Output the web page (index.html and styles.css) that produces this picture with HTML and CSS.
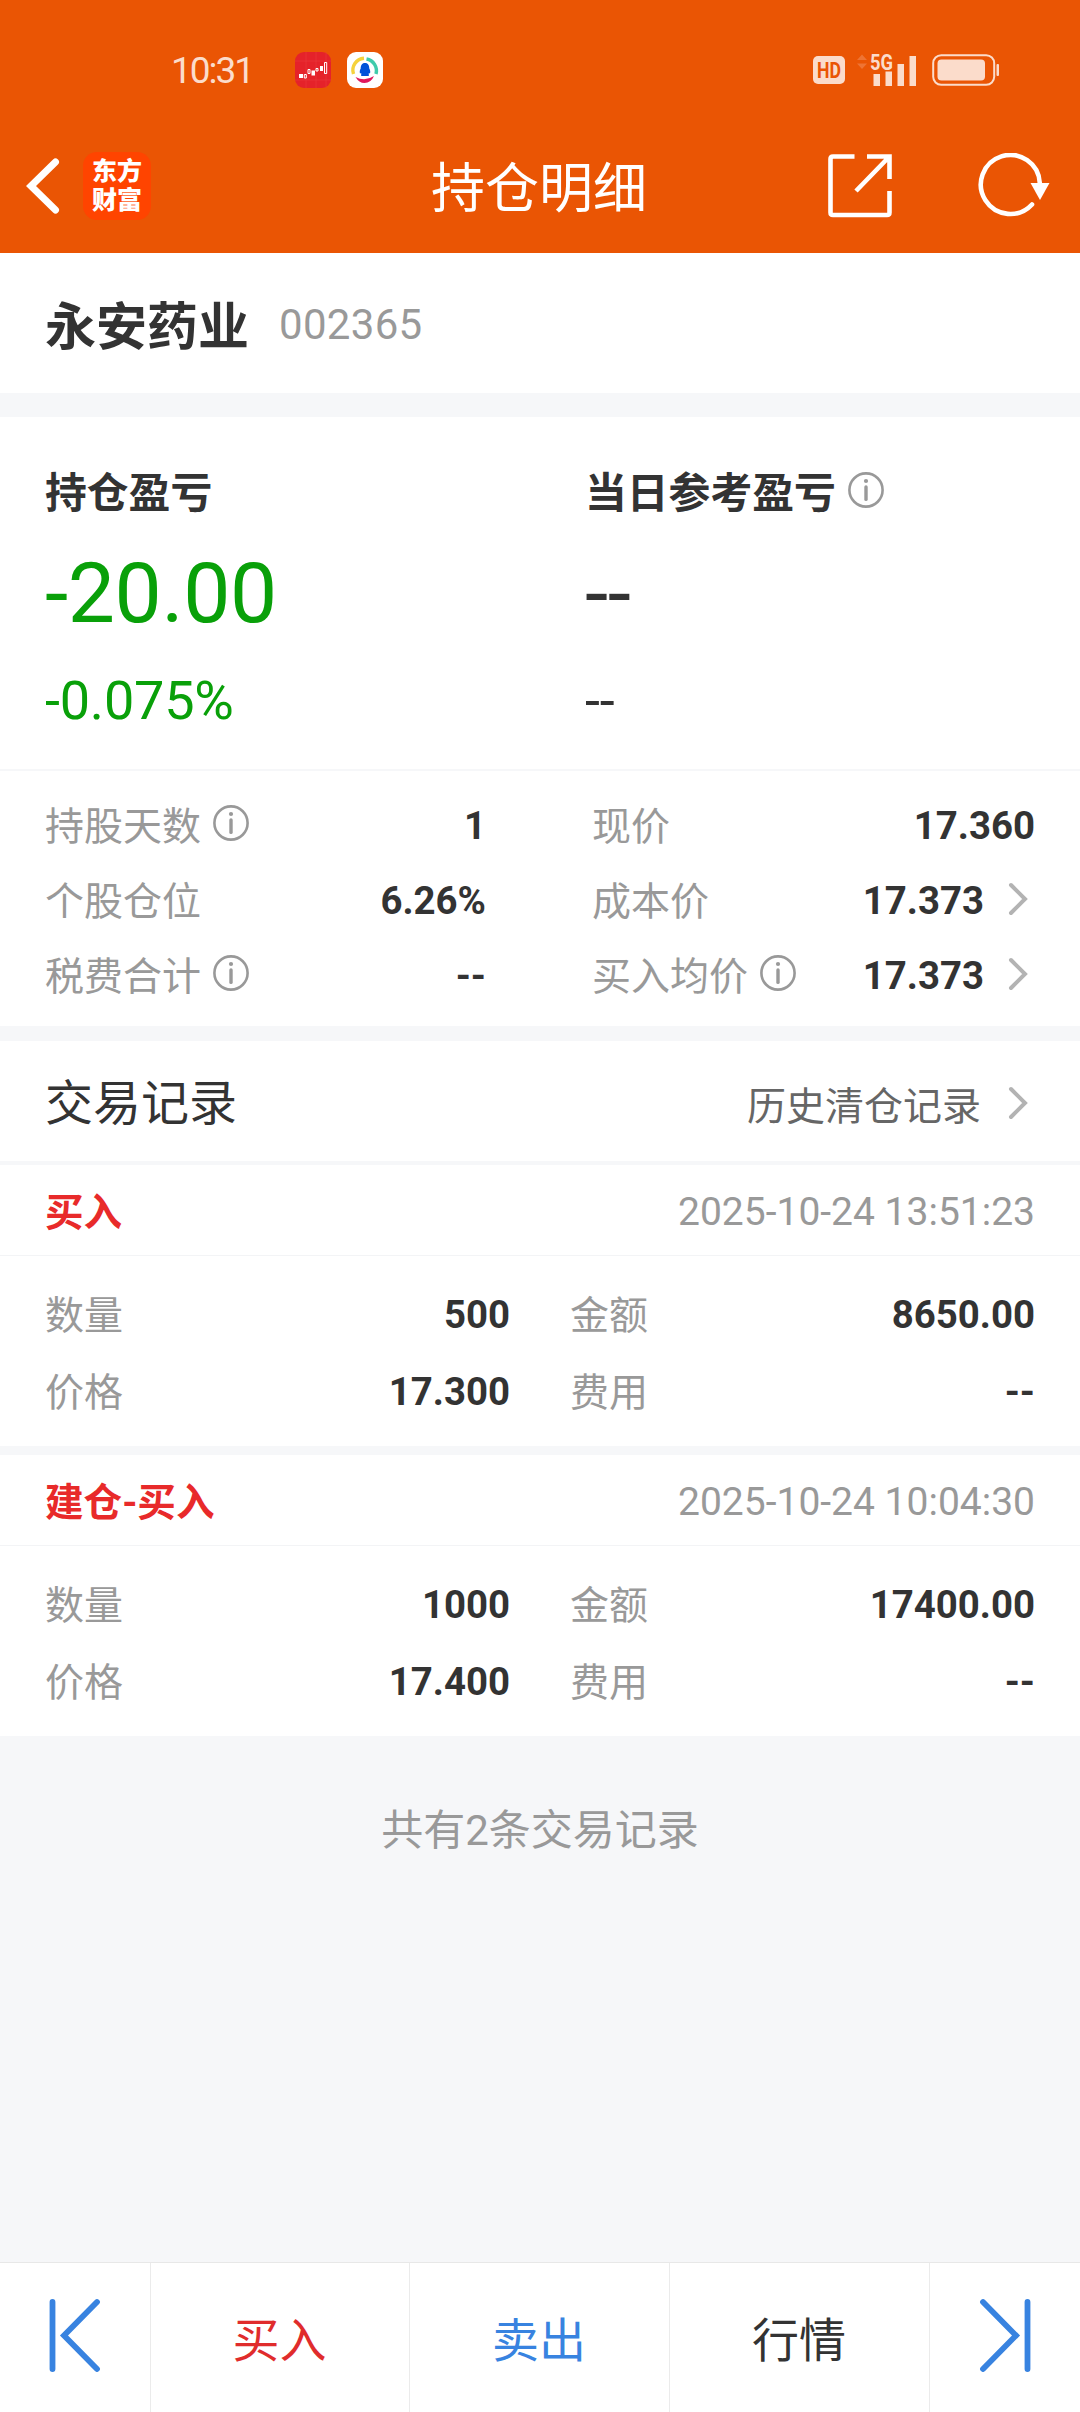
FILE: index.html
```html
<!DOCTYPE html>
<html lang="zh-CN">
<head>
  <meta charset="UTF-8">
  <meta name="viewport" content="width=device-width, initial-scale=1.0">
  <title>持仓明细</title>
  <link rel="stylesheet" href="styles.css">
</head>
<body>

  <!-- Shared icons -->
  <svg class="icon-defs" width="0" height="0">
    <symbol id="icon-info" viewBox="0 0 36 36">
      <circle cx="18" cy="18" r="16.6" fill="none" stroke="#999" stroke-width="2.6"/>
      <circle cx="18" cy="9" r="2.1" fill="#999"/>
      <path d="M18 15v12.4" stroke="#999" stroke-width="3.4" stroke-linecap="round"/>
    </symbol>
    <symbol id="icon-arrow" viewBox="0 0 20 34">
      <path d="M3 3l14 14L3 31" fill="none" stroke="#b3b3b3" stroke-width="4" stroke-linecap="round"/>
    </symbol>
  </svg>

  <header class="header">
    <div class="status-bar">
      <span class="status-time">10:31</span>
      <div class="status-apps">
        <svg width="36" height="36" viewBox="0 0 36 36">
          <rect width="36" height="36" rx="9" fill="#e5222a"/>
          <path d="M11 0v36M21 0v36M31 0v36M0 9h36M0 28h36" stroke="#ea3a3e" stroke-width=".6"/>
          <path d="M4 22h4v4H4zM16.500 18.500h3.500v5h-3.500zM25 14h3v5h-3z" fill="#fff"/>
          <path d="M9.300 22.500h2v3.500h-2zM13 17.500h2v4h-2zM21 16.500h2v2.500h-2zM29.500 10.500h2.200v11h-2.200z" fill="none" stroke="#fff"/>
        </svg>
        <svg width="36" height="36" viewBox="0 0 36 36">
          <rect width="36" height="36" rx="9" fill="#fff"/>
          <path d="M6.500 22A12 12 0 0 1 17 6.200" fill="none" stroke="#f5d23c" stroke-width="3.4"/>
          <path d="M19.500 7A12 12 0 0 1 29 22" fill="none" stroke="#3fcbab" stroke-width="3.4"/>
          <path d="M8.500 25Q18 30 27 24Q24 31 17.500 31Q12 31 8.500 25z" fill="#e0185c"/>
          <path d="M18 11c3.300 0 4.300 2.500 4.300 5.500c1 1.800 1.200 3.500.7 5l-1.200-.5v3h-7.600v-3l-1.200.5c-.5-1.500-.3-3.200.7-5c0-3 1-5.500 4.300-5.500z" fill="#0052d9"/>
        </svg>
      </div>
      <div class="status-icons">
        <svg class="hd" width="32" height="28" viewBox="0 0 32 28">
          <rect width="32" height="28" rx="5" fill="#fbdccb"/>
          <text x="4" y="22" textLength="24" lengthAdjust="spacingAndGlyphs" fill="#ea5504">HD</text>
        </svg>
        <svg class="signal" width="60" height="36" viewBox="0 0 60 36" fill="#fbdccb">
          <path d="M0 8l5-5.500l5 5.500zM0 11.500l5 5.500l5-5.500z" fill="#ee7434"/>
          <text x="13" y="18" textLength="23" lengthAdjust="spacingAndGlyphs">5G</text>
          <path d="M16.500 22h6.500v12h-6.500zM28.500 19.500h6.500v14.500h-6.500zM40.500 12h6.500v22h-6.500zM52.500 4h6.500v30h-6.500z"/>
        </svg>
        <svg width="68" height="32" viewBox="0 0 68 32" fill="#fbdccb">
          <rect x="1.200" y="1.200" width="61" height="29.600" rx="8" fill="none" stroke="#fbdccb" stroke-width="2"/>
          <rect x="5.500" y="5.500" width="47.500" height="21" rx="4"/>
          <rect x="64.500" y="10" width="2.500" height="12" rx="1"/>
        </svg>
      </div>
    </div>

    <nav class="nav-bar">
      <div class="nav-left">
        <svg width="34" height="56" viewBox="0 0 34 56">
          <path d="M29.500 4L5 28l24.500 24" fill="none" stroke="#fff" stroke-width="7" stroke-linecap="round"/>
        </svg>
        <div class="app-logo"><span>东方</span><span>财富</span></div>
      </div>
      <h1 class="nav-title">持仓明细</h1>
      <div class="nav-right">
        <svg width="64" height="64" viewBox="0 0 64 64" fill="none" stroke="#fff" stroke-width="4.600">
          <path d="M26.500 2.500H5Q2.500 2.500 2.500 5v53.500q0 2.500 2.500 2.500h54q2.500 0 2.500-2.500V37"/>
          <path d="M39 2.500h22.500V25M61 3L28 37"/>
        </svg>
        <svg width="74" height="66" viewBox="0 0 74 66">
          <path d="M54 51.500A29.500 29.500 0 1 1 61.800 30" fill="none" stroke="#fff" stroke-width="4.600" stroke-linecap="round"/>
          <path d="M52.500 30h19L62 47z" fill="#fff"/>
        </svg>
      </div>
    </nav>
  </header>

  <main>
    <section class="stock">
      <h2 class="stock-name">永安药业</h2>
      <span class="stock-code">002365</span>
    </section>

    <section class="profit">
      <div class="profit-item">
        <h3>持仓盈亏</h3>
        <p class="profit-value green">-20.00</p>
        <p class="profit-rate green">-0.075%</p>
      </div>
      <div class="profit-item">
        <h3>当日参考盈亏<svg class="info"><use href="#icon-info"/></svg></h3>
        <p class="profit-value">--</p>
        <p class="profit-rate">--</p>
      </div>
    </section>

    <section class="position">
      <div class="position-row">
        <span class="label">持股天数<svg class="info"><use href="#icon-info"/></svg></span>
        <b>1</b>
      </div>
      <div class="position-row">
        <span class="label">现价</span>
        <b>17.360</b>
      </div>
      <div class="position-row">
        <span class="label">个股仓位</span>
        <b>6.26%</b>
      </div>
      <div class="position-row">
        <span class="label">成本价</span>
        <b>17.373</b>
        <svg class="arrow"><use href="#icon-arrow"/></svg>
      </div>
      <div class="position-row">
        <span class="label">税费合计<svg class="info"><use href="#icon-info"/></svg></span>
        <b>--</b>
      </div>
      <div class="position-row">
        <span class="label">买入均价<svg class="info"><use href="#icon-info"/></svg></span>
        <b>17.373</b>
        <svg class="arrow"><use href="#icon-arrow"/></svg>
      </div>
    </section>

    <section class="trades-head">
      <h2>交易记录</h2>
      <a class="history">历史清仓记录<svg class="arrow"><use href="#icon-arrow"/></svg></a>
    </section>

    <section class="trade">
      <div class="trade-head">
        <h3>买入</h3>
        <time>2025-10-24 13:51:23</time>
      </div>
      <div class="trade-body">
        <div class="trade-row"><span class="label">数量</span><b>500</b></div>
        <div class="trade-row"><span class="label">金额</span><b>8650.00</b></div>
        <div class="trade-row"><span class="label">价格</span><b>17.300</b></div>
        <div class="trade-row"><span class="label">费用</span><b>--</b></div>
      </div>
    </section>

    <section class="trade">
      <div class="trade-head">
        <h3>建仓-买入</h3>
        <time>2025-10-24 10:04:30</time>
      </div>
      <div class="trade-body">
        <div class="trade-row"><span class="label">数量</span><b>1000</b></div>
        <div class="trade-row"><span class="label">金额</span><b>17400.00</b></div>
        <div class="trade-row"><span class="label">价格</span><b>17.400</b></div>
        <div class="trade-row"><span class="label">费用</span><b>--</b></div>
      </div>
    </section>

    <p class="total">共有2条交易记录</p>
  </main>

  <footer class="bottom-bar">
    <a class="step">
      <svg width="54" height="74" viewBox="0 0 54 74">
        <path d="M4.500 4v67M49 4L16 37.500l33 33.500" fill="none" stroke="#3883e0" stroke-width="5.800" stroke-linecap="round"/>
      </svg>
    </a>
    <a class="buy">买入</a>
    <a class="sell">卖出</a>
    <a>行情</a>
    <a class="step">
      <svg width="54" height="74" viewBox="0 0 54 74">
        <path d="M49.500 4v67M5 4l33 33.500L5 71" fill="none" stroke="#3883e0" stroke-width="5.800" stroke-linecap="round"/>
      </svg>
    </a>
  </footer>

</body>
</html>
```

FILE: styles.css
```css
* {
  box-sizing: border-box;
  margin: 0;
  padding: 0;
}

body {
  display: flex;
  flex-direction: column;
  width: 1080px;
  height: 2412px;
  background: #f6f7f9;
  color: #333;
  font-family: Roboto, "Noto Sans CJK SC", sans-serif;
  font-size: 39px;
  overflow: hidden;
}

svg {
  display: block;
  flex: none;
}
.icon-defs {
  position: absolute;
}

/* Header */
.header {
  height: 253px;
  background: #ea5504;
  color: #fff;
}
.status-bar {
  display: flex;
  align-items: center;
  height: 140px;
  padding: 0 80px 0 171px;
}
.status-time {
  width: 124px;
  padding-top: 1px;
  color: #fbdccb;
  font-size: 37px;
  letter-spacing: -2px;
}
.status-apps {
  display: flex;
  gap: 16px;
}
.status-icons {
  display: flex;
  align-items: center;
  gap: 12px;
  margin-left: auto;
}
.hd {
  font-size: 22px;
  font-weight: 700;
}
.signal {
  margin-right: 3px;
  font-size: 22px;
  font-weight: 700;
  overflow: visible;
}
.nav-bar {
  display: grid;
  grid-template-columns: 1fr auto 1fr;
  align-items: center;
  height: 91px;
  padding: 0 28px 0 26px;
}
.nav-left {
  display: flex;
  align-items: center;
  gap: 23px;
}
.app-logo {
  display: flex;
  flex-direction: column;
  justify-content: center;
  width: 68px;
  height: 68px;
  border-radius: 14px;
  background: #ff4400;
  font-size: 25px;
  font-weight: 900;
  line-height: 29px;
  text-align: center;
}
.nav-title {
  padding-top: 8px;
  font-size: 54px;
  font-weight: 400;
  line-height: 60px;
}
.nav-right {
  display: flex;
  align-items: center;
  justify-content: flex-end;
  gap: 86px;
}

/* Stock name */
.stock {
  display: flex;
  align-items: center;
  height: 140px;
  margin-bottom: 24px;
  padding: 2px 45px 0;
  background: #fff;
}
.stock-name {
  margin-right: 30px;
  padding-bottom: 2px;
  font-size: 51px;
}
.stock-code {
  color: #999;
  font-size: 42px;
  letter-spacing: 0.3px;
}

/* Profit and loss */
.profit {
  display: grid;
  grid-template-columns: 540px 1fr;
  height: 354px;
  padding: 48px 45px 0;
  background: #fff;
  border-bottom: 2px solid #f6f7f9;
}
.profit-item h3 {
  display: flex;
  align-items: center;
  height: 50px;
  font-size: 41.800px;
}
.info {
  width: 36px;
  height: 36px;
  margin-left: 12px;
}
.profit-value {
  height: 100px;
  margin-top: 29px;
  font-size: 84px;
  line-height: 100px;
  letter-spacing: -0.4px;
}
.profit-rate {
  margin-top: 25px;
  font-size: 54px;
  line-height: 64px;
  letter-spacing: -0.2px;
}
.green {
  color: #09a009;
}

/* Position details */
.position {
  display: grid;
  grid-template-columns: 441px 443px;
  column-gap: 106px;
  grid-auto-rows: 75px;
  height: 255px;
  padding: 17px 45px 0;
  background: #fff;
}
.position-row {
  display: flex;
  align-items: center;
}
.position-row b,
.trade-row b {
  font-size: 38.400px;
}
.label {
  display: flex;
  align-items: center;
  margin-right: auto;
  padding-bottom: 5px;
  color: #999;
}
.arrow {
  width: 20px;
  height: 34px;
  margin: 0 7px 0 24px;
}
.position-row .arrow {
  margin-bottom: 4px;
}

/* Trade records */
.trades-head {
  display: flex;
  align-items: center;
  justify-content: space-between;
  height: 120px;
  margin: 15px 0 4px;
  padding: 0 45px;
  background: #fff;
}
.trades-head h2 {
  padding-bottom: 4px;
  font-size: 48px;
  font-weight: 400;
}
.history {
  display: flex;
  align-items: center;
  padding-top: 4px;
  color: #666;
}
.history .arrow {
  margin-left: 27px;
}
.trade {
  height: 281px;
  margin-bottom: 9px;
  background: #fff;
}
.trade-head {
  display: flex;
  align-items: center;
  justify-content: space-between;
  height: 91px;
  padding: 0 45px;
  border-bottom: 1px solid #f3f4f6;
}
.trade-head h3 {
  padding-bottom: 2px;
  color: #e82a2a;
  font-size: 38.600px;
}
.trade-head time {
  padding-top: 3px;
  color: #999;
}
.trade-body {
  display: grid;
  grid-template-columns: 465px 465px;
  column-gap: 60px;
  grid-auto-rows: 77px;
  padding: 20px 45px 0;
}
.trade-row {
  display: flex;
  align-items: center;
}
.total {
  margin-top: 60px;
  color: #999;
  font-size: 42px;
  text-align: center;
}

/* Bottom bar */
.bottom-bar {
  display: grid;
  grid-template-columns: 151px 259px 260px 260px 150px;
  height: 150px;
  margin-top: auto;
  background: #fff;
  border-top: 1px solid #e8e8e8;
}
.bottom-bar a {
  display: flex;
  align-items: center;
  justify-content: center;
  padding: 0 1px 2px 0;
  border-right: 1px solid #ebebeb;
  font-size: 47px;
}
.bottom-bar .step {
  padding: 0 0 5px;
}
.bottom-bar a:last-child {
  border-right: none;
}
.bottom-bar .buy {
  color: #e02c2c;
}
.bottom-bar .sell {
  color: #3883e0;
}
```
